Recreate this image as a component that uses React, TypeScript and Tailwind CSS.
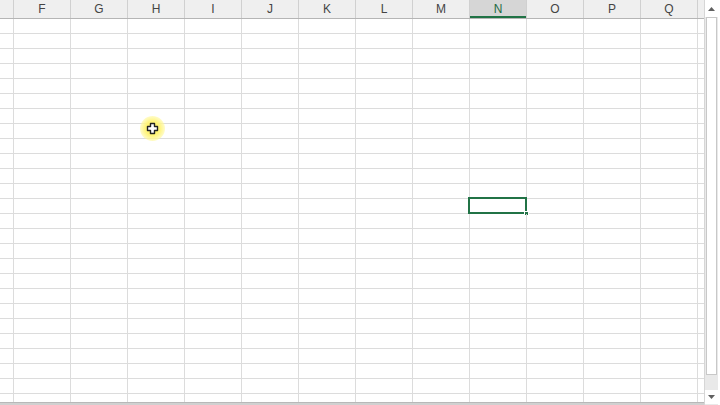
const columns = ["F", "G", "H", "I", "J", "K", "L", "M", "N", "O", "P", "Q"];
const rowCount = 26;

function Cursor() {
  return (
    <div className="absolute left-[140px] top-[116px] w-[25px] h-[25px] rounded-full bg-[radial-gradient(circle,_#fff36a_0%,_#fff47a_40%,_rgba(255,248,150,0.65)_65%,_rgba(255,255,255,0)_100%)] flex items-center justify-center">
      <svg width="13" height="13" viewBox="0 0 13 13">
        <path
          d="M4.5 1.5h4v3h3v4h-3v3h-4v-3h-3v-4h3z"
          fill="#fff"
          stroke="#222"
          strokeWidth="1.4"
          strokeLinejoin="round"
        />
      </svg>
    </div>
  );
}

export default function App() {
  return (
    <div className="w-[720px] h-[405px] bg-white flex overflow-hidden font-['Liberation_Sans',Arial,sans-serif] relative">
      {/* grid */}
      <div className="w-[704px] h-[405px] flex flex-col overflow-hidden">
        {/* column headers */}
        <div className="flex h-[19px] shrink-0 bg-[#efefef] border-b border-[#b5b5b5]">
          <div className="w-[14px] shrink-0 border-r border-[#d0d0d0]" />
          {columns.map((c) => (
            <div
              key={c}
              className={
                c === "N"
                  ? "w-[57px] shrink-0 border-r border-[#d0d0d0] bg-[#d6d6d6] flex items-center justify-center text-[12px] text-[#1e6b43] shadow-[inset_0_-2px_0_#217346]"
                  : "w-[57px] shrink-0 border-r border-[#d0d0d0] flex items-center justify-center text-[12px] text-[#444]"
              }
            >
              {c}
            </div>
          ))}
          <div className="flex-1" />
        </div>

        {/* rows */}
        <div className="flex flex-col flex-1 min-h-0 overflow-hidden">
          {Array.from({ length: rowCount }).map((_, r) => (
            <div key={r} className="flex h-[15px] shrink-0 border-b border-[#dcdcdc]">
              <div className="w-[14px] shrink-0 border-r border-[#dcdcdc]" />
              {columns.map((c) => (
                <div key={c} className="w-[57px] shrink-0 border-r border-[#dcdcdc] relative">
                  {c === "N" && r === 12 && (
                    <div className="absolute -left-[2px] -top-[2px] w-[59px] h-[17px] border-2 border-[#217346]">
                      <div className="absolute -right-[4px] -bottom-[4px] w-[5px] h-[5px] bg-[#217346] border border-white" />
                    </div>
                  )}
                </div>
              ))}
              <div className="flex-1" />
            </div>
          ))}
        </div>
        <div className="h-[3px] bg-[#d0d0d0] border-t border-[#b8b8b8] shrink-0" />
      </div>

      {/* vertical scrollbar */}
      <div className="w-[14px] h-[405px] flex flex-col bg-[#e9e9e9] border-l border-[#d6d6d6]">
        <div className="h-[17px] shrink-0 bg-white flex items-center justify-center">
          <svg width="7" height="4" viewBox="0 0 7 4">
            <path d="M0 4L3.5 0L7 4z" fill="#606060" />
          </svg>
        </div>
        <div className="h-[358px] shrink-0 mx-[1px] bg-white border border-[#c8c8c8]" />
        <div className="flex-1" />
        <div className="h-[14px] shrink-0 bg-white flex items-center justify-center mb-[1px]">
          <svg width="7" height="4" viewBox="0 0 7 4">
            <path d="M0 0L3.5 4L7 0z" fill="#606060" />
          </svg>
        </div>
      </div>
      <div className="w-[2px] h-[405px] bg-white" />

      <Cursor />
    </div>
  );
}
